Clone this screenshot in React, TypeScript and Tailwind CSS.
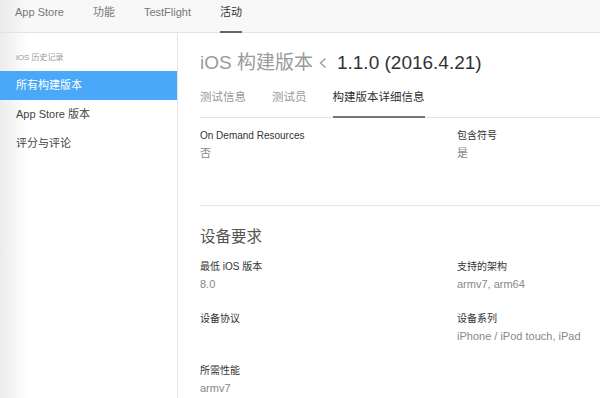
import React from "react";

const font = { fontFamily: '"Liberation Sans", "Noto Sans CJK SC", sans-serif' };

function Field({ label, value }: { label: string; value?: string }) {
  return (
    <div>
      <div className="text-[10px] leading-[14px] text-[#333]">{label}</div>
      {value !== undefined && (
        <div className="mt-[2px] text-[11px] leading-[16px] text-[#888]">{value}</div>
      )}
    </div>
  );
}

export default function App() {
  const nav = ["App Store", "功能", "TestFlight", "活动"];
  const tabs = ["测试信息", "测试员", "构建版本详细信息"];
  return (
    <div
      className="w-[600px] h-[398px] overflow-hidden bg-white flex flex-col"
      style={font}
    >
      <div className="h-[33px] shrink-0 border-b border-[#e3e3e3] bg-[linear-gradient(to_right,#ebebeb,#f8f8f8_28px)] flex pl-[15px] gap-[29px]">
        {nav.map((n, i) => (
          <div
            key={n}
            className={`relative h-full pt-[4px] text-[11px] leading-[16px] ${
              i === 3 ? "text-[#333]" : "text-[#777]"
            }`}
          >
            {n}
            {i === 3 && (
              <span className="absolute left-0 right-0 bottom-[-1px] h-[2px] bg-[#666]" />
            )}
          </div>
        ))}
      </div>
      <div className="flex flex-1 min-h-0">
        <div className="w-[178px] shrink-0 border-r border-[#e5e5e5] bg-[linear-gradient(to_right,#ececec,#ffffff_28px)] pt-[19px]">
          <div className="pl-[16px] text-[8px] leading-[12px] text-[#999]">iOS 历史记录</div>
          <div className="mt-[7px] flex flex-col">
            <div className="h-[29px] bg-[#4aa8f8] pl-[16px] flex items-center text-[11px] text-white">
              所有构建版本
            </div>
            <div className="h-[29px] pl-[16px] flex items-center text-[11px] text-[#444]">
              App Store 版本
            </div>
            <div className="h-[29px] pl-[16px] flex items-center text-[11px] text-[#444]">
              评分与评论
            </div>
          </div>
        </div>
        <div className="flex-1 min-w-0 pl-[22px] pt-[18px]">
          <div className="flex items-center h-[24px] text-[19px] whitespace-nowrap">
            <span className="text-[#9a9a9a]">iOS 构建版本</span>
            <svg width="8" height="12" viewBox="0 0 8 12" className="ml-[6px] mr-[10px]">
              <polyline points="6.5,1.5 1.5,6 6.5,10.5" fill="none" stroke="#999" strokeWidth="1.3" />
            </svg>
            <span className="text-[#333]">1.1.0 (2016.4.21)</span>
          </div>
          <div className="mt-[14px] flex gap-[26px] border-b border-[#e5e5e5]">
            {tabs.map((t, i) => (
              <div
                key={t}
                className={`relative pb-[12px] text-[11.5px] leading-[16px] ${
                  i === 2 ? "text-[#333]" : "text-[#999]"
                }`}
              >
                {t}
                {i === 2 && (
                  <span className="absolute left-0 right-0 bottom-[-1px] h-[2px] bg-[#777]" />
                )}
              </div>
            ))}
          </div>
          <div className="pt-[11px] pb-[44px] border-b border-[#e8e8e8] grid grid-cols-[257px_1fr]">
            <Field label="On Demand Resources" value="否" />
            <Field label="包含符号" value="是" />
          </div>
          <div className="pt-[21px]">
            <div className="text-[15.5px] leading-[20px] text-[#555]">设备要求</div>
            <div className="mt-[13px] grid grid-cols-[257px_1fr] gap-y-[20px]">
              <Field label="最低 iOS 版本" value="8.0" />
              <Field label="支持的架构" value="armv7, arm64" />
              <Field label="设备协议" />
              <Field label="设备系列" value="iPhone / iPod touch, iPad" />
              <Field label="所需性能" value="armv7" />
            </div>
          </div>
        </div>
      </div>
    </div>
  );
}
